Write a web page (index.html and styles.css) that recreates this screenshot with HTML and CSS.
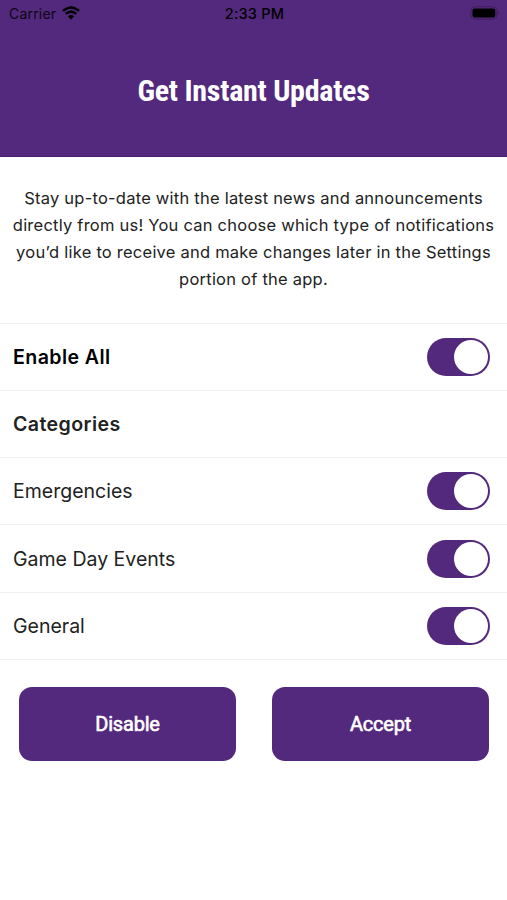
FILE: index.html
```
<!doctype html>
<html lang="en">
<head>
    <meta charset="UTF-8">
    <meta name="viewport" content="width=device-width, initial-scale=1.0">
    <title>Get Instant Updates</title>
    <link rel="stylesheet" href="styles.css">
</head>
<body>
    <header class="header">
        <div class="status-bar">
            <div class="status-left">
                <span class="carrier">Carrier</span>
                <svg class="wifi" width="18" height="14" viewBox="0 0 18 14">
                    <path d="M1 4.9Q9-2 17 4.9M3.8 7.9Q9 3.4 14.2 7.9" fill="none" stroke="#000" stroke-width="2.5"/>
                    <path d="M5.9 10.4Q9 7.6 12.1 10.4L9 13.6Z"/>
                </svg>
            </div>
            <span class="time">2:33 PM</span>
            <div class="status-right">
                <svg class="battery" width="30" height="14" viewBox="0 0 30 14">
                    <rect x=".8" y=".8" width="26" height="12.4" rx="4" fill="none" stroke="#000" stroke-opacity=".25"/>
                    <rect x="2.5" y="2.5" width="22.8" height="9" rx="2"/>
                    <path d="M27.7 4.8Q30 7 27.7 9.2Z" fill-opacity=".3"/>
                </svg>
            </div>
        </div>
        <h1 class="title">Get Instant Updates</h1>
    </header>
    <p class="intro">Stay up-to-date with the latest news and announcements<br>
        directly from us! You can choose which type of notifications<br>
        you’d like to receive and make changes later in the Settings<br>
        portion of the app.</p>
    <ul class="list">
        <li class="row row-all"><span>Enable All</span><i class="switch"></i></li>
        <li class="row row-head"><span>Categories</span></li>
        <li class="row"><span>Emergencies</span><i class="switch"></i></li>
        <li class="row"><span>Game Day Events</span><i class="switch"></i></li>
        <li class="row"><span>General</span><i class="switch"></i></li>
    </ul>
    <div class="actions">
        <button class="btn" type="button">Disable</button>
        <button class="btn" type="button">Accept</button>
    </div>
</body>
</html>
```
FILE: styles.css
```
* {margin: 0; padding: 0; box-sizing: border-box;}
body {background: #fff; color: #222; font-family: Inter, "Liberation Sans", sans-serif; overflow: hidden;}

.header {height: 157px; background: #53297d; border-bottom: 1px solid #4a2074;}
.status-bar {display: grid; grid-template-columns: 1fr auto 1fr; align-items: center; height: 26px; padding: 0 7px 0 9px; color: #000; font-size: 14px;}
.status-left {display: flex; align-items: center; gap: 6px;}
.carrier {letter-spacing: .2px; opacity: .85;}
.time {font-weight: 500; font-size: 14.5px; letter-spacing: .2px;}
.status-right {display: flex; justify-content: flex-end;}
.title {margin-top: 45px; color: #fff; font: 700 30px/40px "Roboto Condensed", Roboto, sans-serif; font-stretch: 75%; letter-spacing: -.25px; text-align: center; white-space: nowrap;}

.intro {padding-top: 28px; height: 165.6px; font-size: 16.5px; line-height: 27px; letter-spacing: .23px; text-align: center; white-space: nowrap;}

.list {list-style: none; border-top: 1px solid #f1f1f1;}
.row {display: flex; align-items: center; justify-content: space-between; height: 67.3px; padding: 0 17px 0 13px; border-bottom: 1px solid #f1f1f1; font-size: 19.5px;}
.row-all, .row-head {font-weight: 600; font-size: 19.6px; letter-spacing: .4px;}
.row-all {color: #000;}
.switch {display: flex; justify-content: flex-end; width: 63px; height: 38px; padding: 2px; border-radius: 19px; background: #53297d;}
.switch::after {content: ""; width: 34px; height: 34px; border-radius: 50%; background: #fff;}

.actions {display: flex; justify-content: space-between; padding: 27px 18px 0 19px;}
.btn {width: 217px; height: 74px; border: 0; border-radius: 13px; background: #53297d; color: #fff; font: 400 20px Roboto, sans-serif; letter-spacing: -.2px; -webkit-text-stroke: .6px #fff;}
```
